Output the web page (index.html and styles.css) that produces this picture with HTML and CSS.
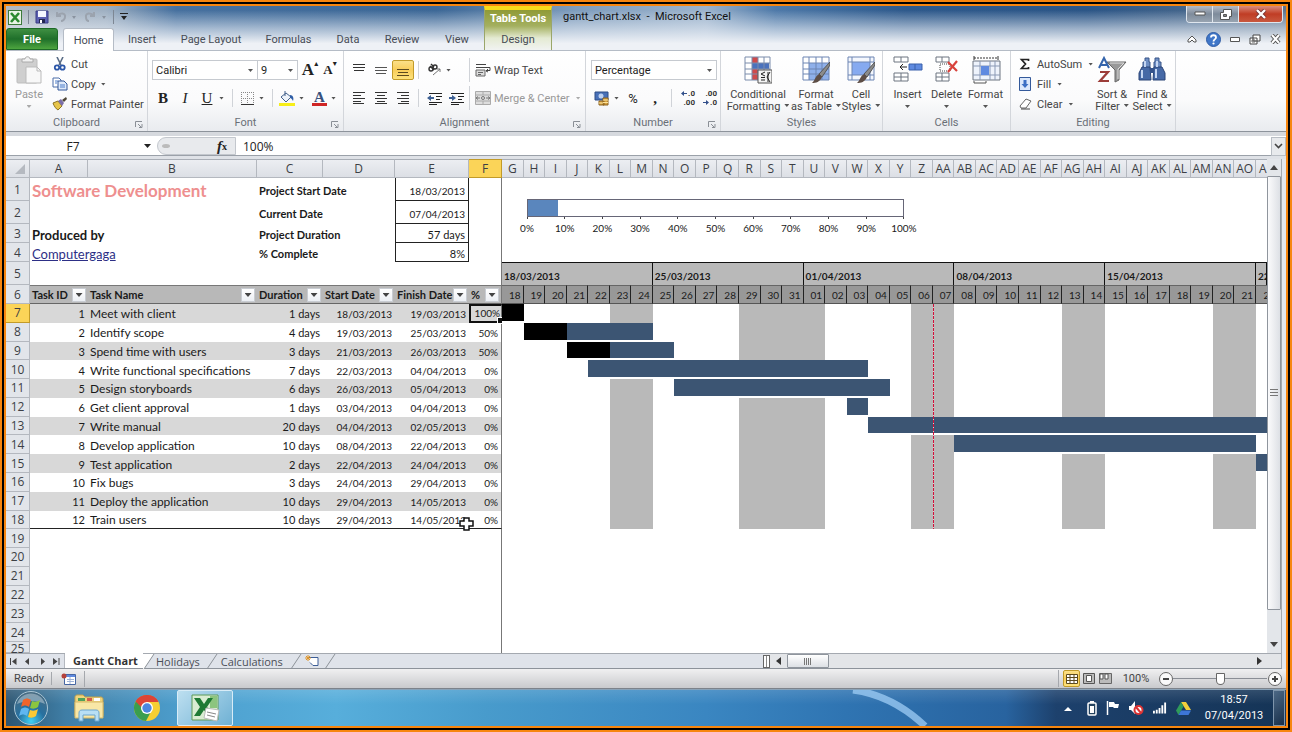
FILE: index.html
```html
<!DOCTYPE html>
<html lang="en">
<head>
<meta charset="UTF-8">
<meta name="viewport" content="width=device-width, initial-scale=1.0">
<title>gantt_chart.xlsx - Microsoft Excel</title>
<link rel="stylesheet" href="styles.css">
</head>
<body>
<div class="frame">
<div class="window">

    <header class="titlebar">
        <div class="quick">
            <svg width="14" height="15" viewBox="0 0 14 15"><rect x=".5" y=".5" width="13" height="14" fill="#e9f5e6" stroke="#3c7a3a"/><path d="M3 3l8 9M11 3l-8 9" stroke="#2b8a2f" stroke-width="2.6"/></svg>
            <i class="bar"></i>
            <button aria-label="Save"><svg width="14" height="14" viewBox="0 0 14 14"><path d="M1 1h12v12H1z" fill="#5b5fb0" stroke="#3a3d86"/><path d="M3 1h8v6H3z" fill="#f4f6ff"/><path d="M4 9h6v4H4z" fill="#23264f"/><path d="M5 10h2v3H5z" fill="#fff"/></svg></button>
            <button aria-label="Undo"><svg width="22" height="12" viewBox="0 0 22 12"><path d="M2 1v4h4M2 5c3-4 9-3 8 1 0 2-2 4-4 4" fill="none" stroke="#9ba3ae" stroke-width="2"/><path d="M17 5h4l-2 3z" fill="#8a93a0"/></svg></button>
            <button aria-label="Redo"><svg width="24" height="12" viewBox="0 0 24 12"><path d="M11 1v4H7M11 5c-3-4-9-3-8 1 0 2 1 4 3 4" fill="none" stroke="#9ba3ae" stroke-width="2"/><path d="M19 5h4l-2 3z" fill="#8a93a0"/></svg></button>
            <i class="bar"></i>
            <button aria-label="Customise"><svg width="8" height="8" viewBox="0 0 8 8"><path d="M0 0h8v1H0zM1 3h6L4 7z" fill="#222"/></svg></button>
        </div>
        <nav class="tabs">
            <button class="tab file">File</button>
            <button class="tab home">Home</button>
            <button class="tab insert">Insert</button>
            <button class="tab page">Page Layout</button>
            <button class="tab formulas">Formulas</button>
            <button class="tab data">Data</button>
            <button class="tab review">Review</button>
            <button class="tab view">View</button>
        </nav>
        <div class="tools-tab">
            <span class="tools-name">Table Tools</span>
            <button class="tab">Design</button>
        </div>
        <div class="doc-title">gantt_chart.xlsx&nbsp; - &nbsp;Microsoft Excel</div>
        <div class="window-side">
            <div class="window-buttons">
                <button class="min" aria-label="Minimise"><svg width="12" height="6" viewBox="0 0 12 6"><path d="M1 1h10v3H1z" fill="#fff" stroke="#555"/></svg></button>
                <button class="max" aria-label="Restore"><svg width="12" height="11" viewBox="0 0 12 11"><path d="M3.500.5h8v7h-2v3h-9v-7h3z" fill="#fff" stroke="#555"/><path d="M3.500 5.500h3v2h-3z" fill="#888" stroke="#555"/></svg></button>
                <button class="close" aria-label="Close"><svg width="12" height="10" viewBox="0 0 12 10"><path d="M2 1l8 8M10 1L2 9" stroke="#733" stroke-width="4"/><path d="M2 1l8 8M10 1L2 9" stroke="#fff" stroke-width="2.400"/></svg></button>
            </div>
            <div class="book-buttons">
                <button aria-label="Hide ribbon"><svg width="10" height="8" viewBox="0 0 10 8"><path d="M1 5l4-4 4 4v2H7L5 5 3 7H1z" fill="#fff" stroke="#555"/></svg></button>
                <button aria-label="Help"><svg width="15" height="15" viewBox="0 0 15 15"><circle cx="7.500" cy="7.500" r="7" fill="#3f76c8" stroke="#2f5ca5"/><path d="M5 5.500c0-3 5-3 5 0 0 2-2.500 1.800-2.500 4" fill="none" stroke="#fff" stroke-width="1.800"/><circle cx="7.500" cy="11.500" r="1.100" fill="#fff"/></svg></button>
                <button aria-label="Minimise workbook"><svg width="10" height="5" viewBox="0 0 10 5"><path d="M.5.5h9v4h-9z" fill="#fff" stroke="#555"/></svg></button>
                <button aria-label="Restore workbook"><svg width="12" height="11" viewBox="0 0 12 11"><path d="M4 1h7v6H4zM1 4h7v6H1z" fill="#fff" stroke="#444"/><path d="M3 6h3v2H3z" fill="none" stroke="#666"/></svg></button>
                <button aria-label="Close workbook"><svg width="11" height="10" viewBox="0 0 11 10"><path d="M2 1l7 8M9 1L2 9" stroke="#555" stroke-width="4"/><path d="M2 1l7 8M9 1L2 9" stroke="#fff" stroke-width="2"/></svg></button>
            </div>
        </div>
    </header>

    <div class="ribbon">
        <section class="group clipboard">
            <div class="group-body">
                <button class="big off">
                    <svg width="28" height="28" viewBox="0 0 28 28"><rect x="2" y="3" width="20" height="24" rx="1" fill="#cfcfcf" stroke="#bdbdbd"/><path d="M7 6V3h3c0-3 5-3 5 0h3v3z" fill="#f1f1f1" stroke="#aaa"/><path d="M11 11h11l4 4v12H11z" fill="#f8f8f8" stroke="#bbb"/><path d="M22 11v4h4" fill="none" stroke="#bbb"/></svg>
                    <span>Paste</span><i class="caret"></i>
                </button>
                <div class="stack">
                    <button><svg width="16" height="14" viewBox="0 0 16 14"><path d="M5 0l4 8M11 0L7 8" stroke="#5b6d86" stroke-width="1.600"/><circle cx="5" cy="10.500" r="2.200" fill="none" stroke="#2b56a8" stroke-width="1.800"/><circle cx="10.500" cy="10.500" r="2.200" fill="none" stroke="#2b56a8" stroke-width="1.800"/></svg>Cut</button>
                    <button><svg width="16" height="14" viewBox="0 0 16 14"><path d="M1 1h6l2 2v7H1z" fill="#fff" stroke="#4a6da8"/><path d="M6 4h6l3 3v6H6z" fill="#dfeafa" stroke="#34599a"/><path d="M3 4h3M3 6h2M8 8h5M8 10h5" stroke="#4f7fca"/></svg>Copy<i class="caret"></i></button>
                    <button><svg width="16" height="14" viewBox="0 0 16 14"><path d="M1 6l5-2 4 5-4 4c-2-1-4-4-5-7z" fill="#e7c54a" stroke="#8c7322"/><path d="M6 4l3-2 3 4-2 3z" fill="#7a6ea8"/><path d="M10 3l4-3 1 2-3 3z" fill="#4d4536"/></svg>Format Painter</button>
                </div>
            </div>
            <footer>Clipboard</footer>
            <button class="launch" aria-label="Clipboard options"><svg width="8" height="7" viewBox="0 0 8 7"><path d="M.5 6V.5H7M3 3l3 3M7 3v3.500H4" fill="none" stroke="#8a8f96"/></svg></button>
        </section>

        <section class="group font">
            <div class="group-body rows">
                <div class="row">
                    <label class="pick font-name"><select aria-label="Font"><option>Calibri</option></select></label>
                    <label class="pick font-size"><select aria-label="Font size"><option>9</option></select></label>
                    <button class="icon serif grow">A<sup>▴</sup></button>
                    <button class="icon serif shrink">A<sup>▾</sup></button>
                </div>
                <div class="row">
                    <button class="icon serif"><b>B</b></button>
                    <button class="icon serif"><em>I</em></button>
                    <button class="icon serif"><u>U</u></button>
                    <i class="caret"></i>
                    <i class="sep"></i>
                    <button class="icon" aria-label="Borders"><svg width="13" height="13" viewBox="0 0 13 13"><path d="M.5 0v12M6.500 0v12M12.500 0v12M0 .5h13M0 6.500h13" stroke="#888" stroke-dasharray="1 1"/><path d="M0 12.500h13" stroke="#333"/></svg></button>
                    <i class="caret"></i>
                    <i class="sep"></i>
                    <button class="icon" aria-label="Fill colour"><svg width="16" height="15" viewBox="0 0 16 15"><path d="M2 6l5-4 5 4-5 5z" fill="#eef3fa" stroke="#43618c"/><path d="M6 0v5" stroke="#43618c"/><path d="M11 4c3 0 4 3 3 6-1-2-2-3-3-3z" fill="#2f5da6"/><path d="M0 12h16v3H0z" fill="#f7ee19"/></svg></button>
                    <i class="caret"></i>
                    <button class="icon font-color serif">A</button>
                    <i class="caret"></i>
                </div>
            </div>
            <footer>Font</footer>
            <button class="launch" aria-label="Font options"><svg width="8" height="7" viewBox="0 0 8 7"><path d="M.5 6V.5H7M3 3l3 3M7 3v3.500H4" fill="none" stroke="#8a8f96"/></svg></button>
        </section>

        <section class="group alignment">
            <div class="group-body rows">
                <div class="row">
                    <button class="icon" aria-label="Top align"><svg width="14" height="14" viewBox="0 0 14 14"><path d="M1 1.500h12M1 4.500h12M2 7.500h10" stroke="#333"/></svg></button>
                    <button class="icon" aria-label="Middle align"><svg width="14" height="14" viewBox="0 0 14 14"><path d="M1 4.500h12M1 7.500h12M2 10.500h10" stroke="#555"/></svg></button>
                    <button class="icon picked" aria-label="Bottom align"><svg width="14" height="14" viewBox="0 0 14 14"><path d="M1 6.500h12M2 9.500h10M1 12.500h12" stroke="#5c4a1e"/></svg></button>
                    <i class="sep"></i>
                    <button class="icon" aria-label="Orientation"><svg width="16" height="14" viewBox="0 0 16 14"><g fill="none" stroke="#333"><circle cx="4" cy="6" r="2" stroke-width="1.400"/><path d="M3 3l4 4" stroke-width="1.400"/><circle cx="8" cy="4" r="2" stroke-width="1.400"/><path d="M4 1l3 3" stroke-width="1.400"/><path d="M6 12l7-6M10 6h3v3" stroke="#777"/></g></svg></button>
                    <i class="caret"></i>
                    <i class="sep tall"></i>
                    <button class="wide"><svg width="16" height="14" viewBox="0 0 16 14"><path d="M1 1.500h10M1 4.500h14v3h-3M13 6l-2 2 2 1" fill="none" stroke="#444"/><path d="M1 7h9v6H1z" fill="#ddd" stroke="#666"/><path d="M3 9.500h5M3 11.500h3" stroke="#666"/></svg>Wrap Text</button>
                </div>
                <div class="row">
                    <button class="icon" aria-label="Align left"><svg width="14" height="12" viewBox="0 0 14 12"><path d="M1 .5h12M1 3.500h8M1 6.500h12M1 9.500h8M1 11.500h11" stroke="#333"/></svg></button>
                    <button class="icon" aria-label="Centre"><svg width="14" height="12" viewBox="0 0 14 12"><path d="M1 .5h12M3 3.500h8M1 6.500h12M3 9.500h8M1 11.500h12" stroke="#333"/></svg></button>
                    <button class="icon" aria-label="Align right"><svg width="14" height="12" viewBox="0 0 14 12"><path d="M1 .5h12M5 3.500h8M1 6.500h12M5 9.500h8M2 11.500h11" stroke="#333"/></svg></button>
                    <i class="sep"></i>
                    <button class="icon" aria-label="Decrease indent"><svg width="16" height="13" viewBox="0 0 16 13"><path d="M2 1.500h13M9 4.500h6M9 7.500h4M2 10.500h13M2 12.500h8" stroke="#222"/><path d="M0 6l4-3v2h3v2H4v2z" fill="#3d6094"/></svg></button>
                    <button class="icon" aria-label="Increase indent"><svg width="16" height="13" viewBox="0 0 16 13"><path d="M2 1.500h13M9 4.500h6M9 7.500h4M2 10.500h13M2 12.500h8" stroke="#222"/><path d="M7 6L3 3v2H0v2h3v2z" fill="#3d6094"/></svg></button>
                    <i class="sep tall merge-sep"></i>
                    <button class="wide off"><svg width="16" height="14" viewBox="0 0 16 14"><path d="M.5.5h15v13H.5zM.5 4h15M.5 10h15M8 0v4M8 10v4" fill="#ddd" stroke="#aaa"/><path d="M1 7h4M11 7h4M3 5.500L1 7l2 1.500M13 5.500L15 7l-2 1.500" stroke="#777" fill="none"/><circle cx="8" cy="7" r="1.500" fill="none" stroke="#777"/></svg>Merge &amp; Center<i class="caret"></i></button>
                </div>
            </div>
            <footer>Alignment</footer>
            <button class="launch" aria-label="Alignment options"><svg width="8" height="7" viewBox="0 0 8 7"><path d="M.5 6V.5H7M3 3l3 3M7 3v3.500H4" fill="none" stroke="#8a8f96"/></svg></button>
        </section>

        <section class="group number">
            <div class="group-body rows">
                <div class="row">
                    <label class="pick format"><select aria-label="Number format"><option>Percentage</option></select></label>
                </div>
                <div class="row">
                    <button class="icon" aria-label="Accounting format"><svg width="16" height="15" viewBox="0 0 16 15"><path d="M1 1h13v8H1z" fill="#4870b8" stroke="#2d4c86"/><circle cx="7" cy="5" r="2.500" fill="#bcd0f0"/><path d="M9 7h5v7H9zM5 10h5v4H5z" fill="#d9a441" stroke="#8c6422"/><path d="M9 9h5M9 11.500h5M5 12h4" stroke="#fbe29b"/></svg></button>
                    <i class="caret"></i>
                    <button class="icon percent">%</button>
                    <button class="icon serif"><b>,</b></button>
                    <i class="sep"></i>
                    <button class="icon dec"><span><svg width="6" height="5" viewBox="0 0 6 5"><path d="M0 2.500L3 0v2h3v1H3v2z" fill="#33508a"/></svg>.0</span><span>.00</span></button>
                    <button class="icon dec"><span>.00</span><span><svg width="6" height="5" viewBox="0 0 6 5"><path d="M6 2.500L3 0v2H0v1h3v2z" fill="#33508a"/></svg>.0</span></button>
                </div>
            </div>
            <footer>Number</footer>
            <button class="launch" aria-label="Number options"><svg width="8" height="7" viewBox="0 0 8 7"><path d="M.5 6V.5H7M3 3l3 3M7 3v3.500H4" fill="none" stroke="#8a8f96"/></svg></button>
        </section>

        <section class="group styles">
            <div class="group-body">
                <button class="big cond">
                    <svg width="28" height="28" viewBox="0 0 28 28"><path d="M1 1h25v23H1z" fill="#fff"/><path d="M8 1h6v23H8z" fill="#cf4a4a"/><path d="M8 7h17v6H8z" fill="#4a72bd"/><path d="M1 1h25v23H1zM8 1v23M14 1v23M20 1v23M1 7h25M1 13h25M1 18h25" fill="none" stroke="#7b8cab"/><path d="M14 14h14v13H14z" fill="#f4f4f4" stroke="#555"/><path d="M17 24h4M17 21.500h4M21 16l-4 2 4 2M24 16v10M26 16l-3 5 3 5" fill="none" stroke="#222"/></svg>
                    <span>Conditional</span><span>Formatting<i class="caret"></i></span>
                </button>
                <button class="big astable">
                    <svg width="28" height="28" viewBox="0 0 28 28"><path d="M1 1h26v23H1z" fill="#fff"/><path d="M7 7h20v17H7z" fill="#8fb0ea"/><path d="M1 1h26v23H1zM7 1v23M14 1v23M20 1v23M1 7h26M1 13h26M1 18h26" fill="none" stroke="#6d85b3"/><path d="M28 6L17 18l3 3 8-12z" fill="#8b8b8b" stroke="#555"/><path d="M17 18l3 3c-2 5-6 6-10 6 3-2 3-7 7-9z" fill="#5d4d45"/></svg>
                    <span>Format</span><span>as Table<i class="caret"></i></span>
                </button>
                <button class="big cellst">
                    <svg width="28" height="28" viewBox="0 0 28 28"><path d="M1 1h26v23H1z" fill="#f4f7fd" stroke="#6d85b3"/><path d="M5 6h18v13H5z" fill="#86aaf0"/><path d="M5 1v23M23 1v23M1 6h26M1 19h26" stroke="#6d85b3"/><path d="M28 6L17 18l3 3 8-12z" fill="#8b8b8b" stroke="#555"/><path d="M17 18l3 3c-2 5-6 6-10 6 3-2 3-7 7-9z" fill="#5d4d45"/></svg>
                    <span>Cell</span><span>Styles<i class="caret"></i></span>
                </button>
            </div>
            <footer>Styles</footer>
        </section>

        <section class="group cells">
            <div class="group-body">
                <button class="big">
                    <svg width="30" height="28" viewBox="0 0 30 28"><path d="M1 1h14v5H1zM8 1v5M1 17h14v8H1zM8 17v8M1 21h14" fill="#fff" stroke="#6c7480"/><path d="M16 8h13v6H16z" fill="#5f8ae0" stroke="#3a60ab"/><path d="M22 8v6" stroke="#3a60ab"/><path d="M7 11h7M10 8l-3 3 3 3" fill="none" stroke="#222"/></svg>
                    <span>Insert</span><i class="caret"></i>
                </button>
                <button class="big">
                    <svg width="26" height="28" viewBox="0 0 26 28"><path d="M2 1h13v5H2zM8 1v5M2 17h13v8H2zM8 17v8M2 21h13" fill="#fff" stroke="#6c7480"/><path d="M6 8h10v7H6z" fill="none" stroke="#444" stroke-dasharray="1 1"/><path d="M14 6l9 9M23 5l-9 11" stroke="#d9423c" stroke-width="2.200"/></svg>
                    <span>Delete</span><i class="caret"></i>
                </button>
                <button class="big">
                    <svg width="30" height="28" viewBox="0 0 30 28"><path d="M3 2h24" stroke="#333" stroke-dasharray="2 1"/><path d="M3 0v4M27 0v4" stroke="#333"/><path d="M2 5h27v19H2z" fill="#eef3fc" stroke="#6c7480"/><path d="M9 5v19M19 5v19M24 5v19M2 10h27M2 19h27" stroke="#8a99b5"/><path d="M10 10h8v9h-8z" fill="#5f8ae0"/><path d="M3 25v2h12v-2" fill="#fff" stroke="#555"/></svg>
                    <span>Format</span><i class="caret"></i>
                </button>
            </div>
            <footer>Cells</footer>
        </section>

        <section class="group editing">
            <div class="group-body">
                <div class="stack">
                    <button><svg width="16" height="14" viewBox="0 0 16 14"><path d="M11.500 4V2.500H4.500L8.500 7l-4 4.500h7V10" fill="none" stroke="#222" stroke-width="1.700"/></svg>AutoSum<i class="caret"></i></button>
                    <button><svg width="16" height="14" viewBox="0 0 16 14"><path d="M2.500.5h11v13h-11z" fill="#dbe8fb" stroke="#34599a"/><path d="M6.500 3h3v4h2L8 11 4.500 7h2z" fill="#3c6fc4"/></svg>Fill<i class="caret"></i></button>
                    <button><svg width="16" height="14" viewBox="0 0 16 14"><path d="M3 9l6-7 5 2-5 7H4z" fill="#fff" stroke="#666"/><path d="M4 12h9" stroke="#444"/></svg>Clear<i class="caret"></i></button>
                </div>
                <button class="big sort">
                    <svg width="30" height="28" viewBox="0 0 30 28"><path d="M10 6h19l-7 8v10l-4 2V14z" fill="#999" stroke="#666"/><path d="M13 7h14l-6 6v10" fill="none" stroke="#ddd"/><path d="M2 12L7 2l5 10M4 9h6" fill="none" stroke="#3464ab" stroke-width="2"/><path d="M3 16h8L3 25h9" fill="none" stroke="#9c3d39" stroke-width="2.200"/></svg>
                    <span>Sort &amp;</span><span>Filter<i class="caret"></i></span>
                </button>
                <button class="big find">
                    <svg width="28" height="28" viewBox="0 0 28 28"><path d="M7 2h4v4h1v6H5V6h2zM17 2h4v4h2v6h-7V6h1z" fill="#6f8fc4" stroke="#3a5689"/><path d="M4 11h8l1 13H1V17zM16 11h8l3 6v7H15z" fill="#4669a6" stroke="#2b4577"/><path d="M12 12h4v5h-4z" fill="#34528a"/><path d="M4 14v8M18 13v9M7 5v6M19 5v6" stroke="#c4d5f1" stroke-width="2"/></svg>
                    <span>Find &amp;</span><span>Select<i class="caret"></i></span>
                </button>
            </div>
            <footer>Editing</footer>
        </section>
    </div>

    <div class="formula">
        <input class="name-box" type="text" value="F7" aria-label="Name box">
        <i class="caret dark"></i>
        <div class="fx-area">
            <svg width="16" height="8" viewBox="0 0 16 8"><ellipse cx="8" cy="4" rx="4" ry="2" fill="#bbb"/></svg>
            <button class="fx" aria-label="Insert function"><i>f</i><small>x</small></button>
        </div>
        <input class="formula-box" type="text" value="100%" aria-label="Formula bar">
        <button class="expand" aria-label="Expand formula bar"><svg width="9" height="6" viewBox="0 0 9 6"><path d="M1 1l3.500 3.500L8 1" fill="none" stroke="#444" stroke-width="1.600"/></svg></button>
    </div>

    <main class="sheet">
        <table class="grid">
            <thead>
                <tr>
                    <th class="corner" aria-label="Select all"></th>
                    <th>A</th><th>B</th><th>C</th><th>D</th><th>E</th><th class="hot">F</th>
                </tr>
            </thead>
            <tbody id="cells">
                <tr><th>1</th><td colspan="2" class="big-title">Software Development</td><td colspan="2" class="strong">Project Start Date</td><td class="boxed date">18/03/2013</td><td></td></tr>
                <tr><th>2</th><td colspan="2"></td><td colspan="2" class="strong">Current Date</td><td class="boxed date">07/04/2013</td><td></td></tr>
                <tr><th>3</th><td colspan="2" class="strong by">Produced by</td><td colspan="2" class="strong">Project Duration</td><td class="boxed">57 days</td><td></td></tr>
                <tr><th>4</th><td colspan="2" class="by"><a href="#">Computergaga</a></td><td colspan="2" class="strong">% Complete</td><td class="boxed">8%</td><td></td></tr>
                <tr><th>5</th><td colspan="6"></td></tr>
                <tr class="heads">
                    <th>6</th>
                    <td>Task ID<button aria-label="Filter Task ID"></button></td>
                    <td>Task Name<button aria-label="Filter Task Name"></button></td>
                    <td>Duration<button aria-label="Filter Duration"></button></td>
                    <td>Start Date<button aria-label="Filter Start Date"></button></td>
                    <td>Finish Date<button aria-label="Filter Finish Date"></button></td>
                    <td>%<button aria-label="Filter %"></button></td>
                </tr>
            </tbody>
        </table>

        <div class="timeline" id="timeline">
            <div class="progress">
                <div class="track"><div class="done" style="width: 8%"></div></div>
                <div class="scale">
                    <span>0%</span><span>10%</span><span>20%</span><span>30%</span><span>40%</span><span>50%</span><span>60%</span><span>70%</span><span>80%</span><span>90%</span><span>100%</span>
                </div>
            </div>
        </div>

        <div class="vscroll">
            <button aria-label="Scroll up"><svg width="8" height="5" viewBox="0 0 8 5"><path d="M0 5l4-5 4 5z" fill="#444"/></svg></button>
            <div class="thumb"><svg width="8" height="8" viewBox="0 0 8 8"><path d="M0 .5h8M0 3.500h8M0 6.500h8" stroke="#777"/></svg></div>
            <button aria-label="Scroll down"><svg width="8" height="5" viewBox="0 0 8 5"><path d="M0 0l4 5 4-5z" fill="#444"/></svg></button>
        </div>
    </main>

    <div class="sheet-bar">
        <div class="sheet-nav">
            <button aria-label="First sheet"><svg width="7" height="7" viewBox="0 0 7 7"><path d="M6.500 0v7L2 3.500z" fill="#444"/><path d="M.5 0v7" stroke="#444"/></svg></button>
            <button aria-label="Previous sheet"><svg width="7" height="7" viewBox="0 0 7 7"><path d="M5 0v7L1 3.500z" fill="#444"/></svg></button>
            <button aria-label="Next sheet"><svg width="7" height="7" viewBox="0 0 7 7"><path d="M2 0v7l4-3.500z" fill="#444"/></svg></button>
            <button aria-label="Last sheet"><svg width="7" height="7" viewBox="0 0 7 7"><path d="M0 0v7l4.500-3.500z" fill="#444"/><path d="M6 0v7" stroke="#444"/></svg></button>
        </div>
        <button class="sheet-tab current">Gantt Chart</button>
        <svg class="slant" width="12" height="16" viewBox="0 0 12 16"><path d="M0 0h11L1 15H0z" fill="#fff"/><path d="M11 0L1 15" stroke="#8d9299"/></svg>
        <button class="sheet-tab holidays">Holidays</button>
        <svg class="slant" width="12" height="16" viewBox="0 0 12 16"><path d="M11 0L1 15" stroke="#8d9299"/></svg>
        <button class="sheet-tab calc">Calculations</button>
        <svg class="slant" width="12" height="16" viewBox="0 0 12 16"><path d="M11 0L1 15" stroke="#8d9299"/></svg>
        <button class="sheet-tab" aria-label="New sheet"><svg width="16" height="12" viewBox="0 0 16 12"><path d="M5 2.500h9v8H9l-3-3" fill="#fff" stroke="#3e5f97"/><path d="M4 0v6M1 3h6M2 1l4 4M6 1L2 5" stroke="#e0962a"/></svg></button>
        <svg class="slant" width="12" height="16" viewBox="0 0 12 16"><path d="M11 0L1 15" stroke="#8d9299"/></svg>
        <div class="hscroll">
            <i class="split"></i>
            <button aria-label="Scroll left"><svg width="5" height="8" viewBox="0 0 5 8"><path d="M5 0v8L0 4z" fill="#333"/></svg></button>
            <div class="thumb"><svg width="8" height="7" viewBox="0 0 8 7"><path d="M.5 0v7M2.500 0v7M4.500 0v7M6.500 0v7" stroke="#777"/></svg></div>
            <i class="room"></i>
            <button aria-label="Scroll right"><svg width="5" height="8" viewBox="0 0 5 8"><path d="M0 0v8l5-4z" fill="#333"/></svg></button>
        </div>
    </div>

    <div class="status">
        <span class="ready">Ready</span>
        <button class="macro" aria-label="Record macro"><svg width="15" height="12" viewBox="0 0 15 12"><path d="M3.500 1.500h11v10h-11z" fill="#fff" stroke="#4666a3"/><path d="M4 2h10v2H4z" fill="#5f8ae0"/><path d="M6 6.500h7M6 8.500h7M9 4v7" stroke="#9fb3d8"/><circle cx="3" cy="3" r="2.500" fill="#b5413b"/></svg></button>
        <div class="views">
            <button class="picked" aria-label="Normal view"><svg width="12" height="10" viewBox="0 0 12 10"><path d="M.5.5h11v9H.5zM4 0v10M8 0v10M0 3.500h12M0 6.500h12" fill="#fff" stroke="#5c4a1e"/></svg></button>
            <button aria-label="Page layout view"><svg width="12" height="11" viewBox="0 0 12 11"><path d="M.5.5h11v10H.5z" fill="#bbb" stroke="#555"/><path d="M3.500 2.500h5v6h-5z" fill="#fff" stroke="#555"/></svg></button>
            <button aria-label="Page break view"><svg width="13" height="11" viewBox="0 0 13 11"><path d="M.5.5h12v10H.5z" fill="#bbb" stroke="#666"/><path d="M1 1h3v5H1zM6 1h3v5H6z" fill="#fff" stroke="#555"/></svg></button>
        </div>
        <span class="zoom-value">100%</span>
        <button class="round" aria-label="Zoom out"><svg width="14" height="14" viewBox="0 0 14 14"><circle cx="7" cy="7" r="6.500" fill="#fafafa" stroke="#666"/><path d="M4 7h6" stroke="#444" stroke-width="2"/></svg></button>
        <input class="zoom" type="range" min="0" max="100" value="50" aria-label="Zoom">
        <button class="round" aria-label="Zoom in"><svg width="14" height="14" viewBox="0 0 14 14"><circle cx="7" cy="7" r="6.500" fill="#fafafa" stroke="#666"/><path d="M4 7h6M7 4v6" stroke="#444" stroke-width="2"/></svg></button>
    </div>

    <footer class="taskbar">
        <svg class="streak" viewBox="0 0 120 36" preserveAspectRatio="none"><path d="M28 0c30 4 55 20 72 36" fill="none" stroke="#9fcdf5" stroke-width="7" opacity=".75"/></svg>
        <button aria-label="Start">
            <svg width="36" height="36" viewBox="0 0 36 36"><defs><radialGradient id="orb" cx=".5" cy=".9" r=".9"><stop offset="0" stop-color="#3fd0f5"/><stop offset=".45" stop-color="#27709f"/><stop offset="1" stop-color="#4a6b80"/></radialGradient></defs><circle cx="18" cy="18" r="16.500" fill="url(#orb)" stroke="#a9c5d5"/><path d="M4 14c4-14 24-14 28 0-8-4-20-4-28 0z" fill="#fff" opacity=".35"/><path d="M10 10c3-2 5-2 8 0l-2 7c-3-2-5-2-8 0z" fill="#f0642b"/><path d="M19 11c3 1 5 1 8-1l-2 7c-3 2-5 2-8 1z" fill="#8cc63f"/><path d="M8 19c3-2 5-2 8 0l-2 7c-3-2-5-2-8 0z" fill="#5fb6f0"/><path d="M17 20c3 1 5 1 8-1l-2 7c-3 2-5 2-8 1z" fill="#fbc934"/></svg>
        </button>
        <button aria-label="Explorer">
            <svg width="32" height="30" viewBox="0 0 32 30"><path d="M2 4c0-1 1-2 2-2h6l2 2h16c1 0 2 1 2 2v17H2z" fill="#eed47c" stroke="#c1a04d"/><path d="M5 5h7v3H5z" fill="#4fa25b"/><path d="M14 5h5v3h-5z" fill="#d45c4c"/><path d="M21 5h6v3h-6z" fill="#fff"/><path d="M2 9h28v16H2z" fill="#f8e7a6" stroke="#d6b968"/><path d="M6 28v-8c0-2 1-3 3-3h14c2 0 3 1 3 3v8h-4v-6H10v6z" fill="#b8dff5" stroke="#6aa5cf"/></svg>
        </button>
        <button aria-label="Chrome">
            <svg width="28" height="28" viewBox="0 0 28 28"><circle cx="14" cy="14" r="13" fill="#f6cf33"/><path d="M14 14L2.700 7.500A13 13 0 0 1 25.300 7.500H14z" fill="#dc4437"/><path d="M2.700 7.500A13 13 0 0 0 13 27l5-9.500-4-3.500z" fill="#3a9e4f"/><path d="M2.700 7.500L9 18l5-10z" fill="#3a9e4f"/><path d="M14 8h11.500a13 13 0 0 0-22.800-.5L8 13z" fill="#dc4437"/><circle cx="14" cy="14" r="6" fill="#fff"/><circle cx="14" cy="14" r="4.700" fill="#4a87e0"/></svg>
        </button>
        <button class="open" aria-label="Excel">
            <svg width="30" height="28" viewBox="0 0 30 28"><path d="M2 1h26v25H2z" fill="#d9edd2" stroke="#5c9a58"/><path d="M20 2h7v12h-7z" fill="#8cc57e"/><path d="M4 4h6l4 6 4-6h5l-6 9 7 9h-6l-4-6-4 6H4l6-9z" fill="#1f7a35"/><path d="M16 14l13 2-2 11-13-3z" fill="#fff" stroke="#bbb"/><path d="M17 18l9 2M17 21l8 2" stroke="#888"/></svg>
        </button>
        <div class="tray">
            <svg class="more" width="8" height="5" viewBox="0 0 8 5"><path d="M0 5l4-4 4 4z" fill="#fff"/></svg>
            <svg width="10" height="15" viewBox="0 0 10 15"><path d="M3 0h4v2H3z" fill="#fff"/><rect x="1" y="2" width="8" height="12" rx="1" fill="#23425f" stroke="#fff" stroke-width="1.500"/><path d="M3 5h4v7H3z" fill="#fff"/></svg>
            <svg width="14" height="14" viewBox="0 0 14 14"><path d="M1.500 0v14" stroke="#fff" stroke-width="1.500"/><path d="M3 1h5l1 2h4l-1 4H8L7 6H3z" fill="#fff"/></svg>
            <svg width="15" height="14" viewBox="0 0 15 14"><path d="M0 5h2l4-5v13L2 9H0z" fill="#fff"/><circle cx="9.500" cy="9" r="4" fill="#fff" stroke="#d33" stroke-width="2"/><path d="M7 6l5 6" stroke="#d33" stroke-width="2"/></svg>
            <svg width="14" height="12" viewBox="0 0 15 12"><path d="M1 12V9M4 12V8M7 12V6M10 12V3M13 12V0" stroke="#fff" stroke-width="2"/></svg>
            <svg width="15" height="13" viewBox="0 0 15 13"><path d="M5 0h5l5 8h-5z" fill="#f3cf3c"/><path d="M5 0l2.500 4.500L2.500 13 0 8.500z" fill="#2f9a5a"/><path d="M5 8.500h10L12.500 13h-10z" fill="#3d76d8"/></svg>
        </div>
        <div class="clock"><span>18:57</span><span>07/04/2013</span></div>
        <button class="peek" aria-label="Show desktop"></button>
    </footer>

</div>
</div>
<script src="script.js"></script>
</body>
</html>
```

FILE: styles.css
```css
* {
    box-sizing: border-box;
}
html, body {
    height: 100%;
}
body {
    margin: 0;
    padding: 2px;
    background: #f7860f;
    font-family: Roboto, "Open Sans", sans-serif;
    font-size: 11px;
    color: #444;
}
.frame {
    height: 100%;
    padding: 2px;
    background: #000;
}
.window {
    height: 100%;
    border: 2px solid #f7860f;
    display: flex;
    flex-direction: column;
    overflow: hidden;
    background: #e4e8ee;
}
button, input, select {
    font: inherit;
    color: inherit;
    margin: 0;
    padding: 0;
    border: 0;
    background: none;
}
button {
    display: flex;
    align-items: center;
    justify-content: center;
    white-space: nowrap;
}
svg {
    display: block;
    flex: none;
}

/* title bar and tabs */
.titlebar {
    position: relative;
    height: 45px;
    flex: none;
    display: flex;
    align-items: flex-end;
    border-bottom: 1px solid #b5bcc6;
    background:
        linear-gradient(to bottom, rgba(238, 242, 247, 0) 10%, rgba(225, 232, 241, .6) 50%, #eef1f6 85%),
        linear-gradient(to right, #b3bac3 0, #9fb0c2 100px, #47719f 170px, #3d6897 430px, #7f9dbd 570px, #9db4cd 700px, #4f7aa9 770px, #2f5a8c 900px, #2c5687 1080px, #5c7590 100%);
}
.quick {
    position: absolute;
    top: 0;
    left: 2px;
    height: 22px;
    display: flex;
    align-items: center;
    gap: 6px;
}
.quick .bar {
    width: 1px;
    height: 14px;
    background: #7d8794;
}
.tabs {
    display: flex;
    height: 22px;
}
.tab {
    height: 22px;
    color: #474c55;
}
.file {
    width: 52px;
    margin-right: 5px;
    color: #fff;
    font-weight: bold;
    border-radius: 3px 3px 0 0;
    border: 1px solid #1d6a26;
    background: linear-gradient(#3f8f42, #1f6f2a 50%, #4da53f);
}
.home {
    width: 51px;
    height: 23px;
    border: 1px solid #b5bcc6;
    border-bottom: 0;
    border-radius: 3px 3px 0 0;
    background: #fff;
}
.insert { width: 56px; }
.page { width: 82px; }
.formulas { width: 73px; }
.data { width: 46px; }
.review { width: 62px; }
.view { width: 48px; }
.tools-tab {
    width: 68px;
    height: 44px;
    margin-left: 3px;
    display: flex;
    flex-direction: column;
    align-items: center;
    border-top: 4px solid #f8dc1a;
    border-left: 1px solid #9aa66a;
    border-right: 1px solid #9aa66a;
    background: linear-gradient(#8f9a36, #a4b060 40%, #e4ead2 70%, #f1f3f2);
}
.tools-name {
    line-height: 18px;
    color: #fff;
    font-weight: bold;
    white-space: nowrap;
}
.doc-title {
    align-self: flex-start;
    padding: 3px 0 0 11px;
    color: #111;
    line-height: 16px;
    white-space: nowrap;
}
.window-side {
    margin-left: auto;
    height: 100%;
    display: flex;
    flex-direction: column;
    align-items: flex-end;
}
.window-buttons {
    display: flex;
    margin-right: 3px;
    border: 1px solid #dfe6ee;
    border-top: 0;
    border-radius: 0 0 4px 4px;
    overflow: hidden;
}
.window-buttons button {
    height: 16px;
    width: 26px;
    border-right: 1px solid #dfe6ee;
    background: linear-gradient(#b4bcc7, #7e8b9b 50%, #98a4b1);
}
.window-buttons .close {
    width: 43px;
    border: 0;
    background: linear-gradient(#dc8d7d, #c03d25 50%, #c8583f);
}
.book-buttons {
    display: flex;
    align-items: center;
    gap: 9px;
    height: 22px;
    margin-top: auto;
    padding-right: 5px;
}

/* ribbon */
.ribbon {
    flex: none;
    height: 81px;
    display: flex;
    background: linear-gradient(#fff, #fbfbfc 60%, #e9ebef);
    border-bottom: 1px solid #8d939b;
}
.group {
    position: relative;
    flex: none;
    display: flex;
    flex-direction: column;
    border-right: 1px solid #d3d6db;
}
.group-body {
    flex: 1;
    min-height: 0;
    display: flex;
}
.group footer {
    flex: none;
    height: 15px;
    line-height: 14px;
    text-align: center;
    color: #6a6f77;
}
.launch {
    position: absolute;
    right: 4px;
    bottom: 3px;
}
.clipboard { width: 142px; }
.font { width: 196px; }
.alignment { width: 242px; }
.number { width: 135px; }
.styles { width: 162px; }
.cells { width: 128px; }
.editing { width: 165px; }

.caret {
    flex: none;
    display: inline-block;
    width: 5px;
    height: 3px;
    background: #555;
    clip-path: polygon(0 0, 100% 0, 50% 100%);
}
.off {
    color: #999;
}
.off .caret {
    background: #aaa;
}
.big {
    flex-direction: column;
    justify-content: flex-start;
    padding-top: 5px;
    line-height: 12px;
}
.big svg {
    margin-bottom: 5px;
}
.big > .caret {
    margin-top: 4px;
}
.big span .caret {
    margin: 0 0 3px 4px;
}
.clipboard .big {
    width: 46px;
}
.stack {
    display: flex;
    flex-direction: column;
    padding-top: 3px;
}
.stack button {
    height: 20px;
    justify-content: flex-start;
    gap: 3px;
}
.clipboard .stack button .caret,
.editing .stack button .caret {
    margin-left: 2px;
}
.editing .stack {
    width: 81px;
    padding-left: 6px;
}
.editing .stack button {
    gap: 4px;
}
.rows {
    flex-direction: column;
    gap: 8px;
    padding: 9px 4px 0;
}
.row {
    height: 20px;
    display: flex;
    align-items: center;
}
.icon {
    flex: none;
    width: 22px;
    height: 20px;
}
.serif {
    font-family: "Liberation Serif", serif;
    font-size: 15px;
    color: #222;
}
.row .grow, .row .shrink {
    width: 20px;
    font-weight: bold;
}
.row .grow {
    font-size: 17px;
    margin-left: 2px;
}
.row .shrink {
    font-size: 13px;
}
.grow sup, .shrink sup {
    font-family: "DejaVu Sans", sans-serif;
    font-size: 8px;
    align-self: flex-start;
    line-height: 8px;
}
.row .font-color {
    font-weight: bold;
    color: #37517d;
    line-height: 12px;
    height: 16px;
    width: 15px;
    border-bottom: 3px solid #cf2626;
}
.sep {
    flex: none;
    width: 1px;
    height: 18px;
    margin: 0 5px;
    background: #d0d3d8;
}
.font .caret { margin-left: 1px; }
.font .sep { margin: 0 3px 0 8px; }
.font .caret + .font-color { margin-left: 8px; }
.font .font-color + .caret { margin-left: 4px; }
.alignment .row .sep { margin: 0 5px 0 4px; }
.alignment .row .tall {
    height: 24px;
    margin: 0 5px 0 18px;
}
.alignment .row .merge-sep { margin-left: 1px; }
.wide {
    gap: 3px;
}
.wide .caret { margin-left: 3px; }
.picked {
    border: 1px solid #c29b29;
    border-radius: 2px;
    background: linear-gradient(#fbe089, #f8cd5a 50%, #fde27b);
}
.pick {
    position: relative;
    flex: none;
    height: 20px;
    border: 1px solid #c6cad0;
    background: #fff;
}
.pick select {
    appearance: none;
    width: 100%;
    height: 18px;
    padding-left: 3px;
    color: #222;
}
.pick::after {
    content: "";
    position: absolute;
    right: 4px;
    top: 8px;
    width: 5px;
    height: 3px;
    background: #555;
    clip-path: polygon(0 0, 100% 0, 50% 100%);
    pointer-events: none;
}
.font-name { width: 106px; }
.font-size {
    width: 40px;
    border-left: 0;
}
.format { width: 126px; }
.number .rows { padding-left: 5px; }
.number .caret { margin: 0 3px 0 1px; }
.number .sep { margin: 0 4px 0 5px; }
.percent {
    font-size: 13px;
    color: #222;
}
.dec {
    flex-direction: column;
    font-size: 8px;
    line-height: 9px;
    font-weight: bold;
    align-items: flex-end;
    color: #333;
    padding-right: 3px;
}
.dec span {
    display: flex;
    align-items: center;
    gap: 1px;
}
.styles .group-body { padding-left: 4px; }
.cond { width: 66px; }
.astable { width: 50px; }
.cellst { width: 40px; }
.cells .group-body { padding-left: 5px; }
.cells .big { width: 39px; }
.sort { width: 40px; }
.find { width: 40px; }

/* formula bar */
.formula {
    flex: none;
    height: 27px;
    display: flex;
    align-items: center;
    border-top: 4px solid #d6d9de;
    border-bottom: 3px solid #dfe2e7;
    background: #fff;
    color: #222;
    box-shadow: inset 0 -1px #9ba1a9;
    font-family: "Open Sans", sans-serif;
}
.name-box {
    width: 134px;
    text-align: center;
    font-size: 12px;
}
.caret.dark {
    width: 7px;
    height: 4px;
    margin: 0 6px 0 4px;
    background: #222;
}
.fx-area {
    width: 79px;
    height: 18px;
    display: flex;
    align-items: center;
    justify-content: space-between;
    padding-right: 8px;
    border: 1px solid #c3c7cd;
    border-radius: 10px 0 0 10px;
    background: #e8eaed;
}
.fx {
    font-family: "Liberation Serif", serif;
    font-size: 15px;
    font-weight: bold;
}
.fx small {
    font-size: 10px;
}
.formula-box {
    flex: 1;
    height: 18px;
    padding-left: 7px;
    font-size: 12px;
}
.expand {
    width: 15px;
    height: 19px;
    border: 1px solid #b9bec5;
    background: #e8eaed;
}

/* worksheet */
.sheet {
    --rows: 19px 23px 23px 19px 19px 23px 19px repeat(18, minmax(0, 1fr)) 11px;
    flex: 1;
    min-height: 0;
    display: flex;
    margin-right: 4px;
    border-right: 1px solid #a4a9b0;
    background: #fff;
    font-family: Lato, "Open Sans", sans-serif;
    font-size: 11px;
    color: #1a1a1a;
}
.grid {
    flex: none;
    display: grid;
    grid-template-columns: 24px 58px 169px 66px 72px 74px 33px;
    grid-template-rows: var(--rows);
    overflow: hidden;
    border-spacing: 0;
}
.grid thead, .grid tbody, .grid tr {
    display: contents;
}
.grid th, .grid td {
    display: flex;
    align-items: center;
    min-width: 0;
    min-height: 0;
    padding: 2px 3px 0 2px;
    white-space: nowrap;
    line-height: 16px;
}
.grid td[colspan="2"] { grid-column: span 2; }
.grid td[colspan="6"] { grid-column: span 6; }
.grid th, .letter {
    justify-content: center;
    padding: 1px 0 0;
    font-family: "Open Sans", "Noto Sans", sans-serif;
    font-size: 12px;
    font-weight: normal;
    color: #3c3f45;
    background: #e2e5ea;
    border-right: 1px solid #b4b8bf;
    border-bottom: 1px solid #b4b8bf;
}
.grid thead th, .letter {
    padding: 0;
    background: linear-gradient(#eceef2, #dcdfe5);
    border-top: 1px solid #a9aeb6;
}
.grid .hot {
    background: #fbd458;
    border-color: #c29b29;
}
.grid thead .corner {
    justify-content: flex-end;
    align-items: flex-end;
}
.corner::after {
    content: "";
    width: 10px;
    height: 10px;
    margin: 0 4px 3px 0;
    background: #b5b9c0;
    clip-path: polygon(100% 0, 100% 100%, 0 100%);
}
.grid tbody tr:last-child th {
    align-items: flex-start;
    line-height: 13px;
    padding: 0;
}
.grid .big-title {
    font-size: 17px;
    font-weight: bold;
    color: #ee8f8f;
}
.strong {
    font-weight: bold;
}
.grid .by {
    font-size: 13px;
}
.by a {
    color: #2d2f86;
}
.grid .boxed {
    justify-content: flex-end;
    padding-top: 3px;
    border: 1px solid #222;
    border-top: 0;
}
.grid .heads td {
    justify-content: space-between;
    padding: 1px 2px 0;
    font-weight: bold;
    background: #b8b8b8;
    border-top: 1px solid #777;
    border-bottom: 1px solid #666;
}
.heads button {
    flex: none;
    width: 14px;
    height: 14px;
    border: 1px solid #c8ccd2;
    background: linear-gradient(#fff, #eceff4);
}
.heads button::after {
    content: "";
    width: 7px;
    height: 4px;
    background: #444;
    clip-path: polygon(0 0, 100% 0, 50% 100%);
}
.grid .task-name {
    font-size: 12px;
}
.grid .num {
    justify-content: flex-end;
}
.grid .date {
    font-size: 10px;
}
.grid tr > td:last-child {
    border-right: 1px solid #777;
}
.grid .odd td {
    background: #d8d8d8;
}
.grid .last td {
    border-bottom: 1px solid #222;
}
.grid td.active {
    position: relative;
    padding: 0 1px;
    border: 2px solid #111;
}
td.active::after {
    content: "";
    position: absolute;
    right: -3px;
    bottom: -3px;
    width: 5px;
    height: 5px;
    border: 1px solid #fff;
    background: #111;
}
.grid .under-mouse {
    position: relative;
}
.mouse {
    position: absolute;
    left: 64px;
    top: 5px;
    z-index: 2;
}

.timeline {
    flex: 1;
    min-width: 0;
    display: grid;
    grid-template-columns: repeat(35, minmax(0, 1fr)) 11px;
    grid-template-rows: var(--rows);
    overflow: hidden;
}
.letter {
    display: flex;
    align-items: center;
    min-width: 0;
}
.week, .day {
    display: flex;
    align-items: center;
    min-width: 0;
    white-space: nowrap;
    font-size: 10px;
}
.week {
    padding: 4px 0 0 2px;
    font-weight: bold;
    background: #b9b9b9;
    border-top: 1px solid #111;
    border-right: 1px solid #111;
    overflow: hidden;
}
.day {
    justify-content: flex-end;
    padding: 1px 2px 0 0;
    background: #989898;
    border-top: 1px solid #666;
    border-right: 1px solid #222;
    border-bottom: 1px solid #555;
}
.letter.cut, .day.cut {
    width: 22px;
}
.weekend {
    background: #b9b9b9;
}
.task {
    background: #3c5573;
    border-bottom: 2px solid #fff;
}
.task.complete {
    background: #000;
}
.today {
    width: 1px;
    background: repeating-linear-gradient(#d0103a 0, #d0103a 3px, #e8c8cc 3px, #e8c8cc 4px);
}
.progress {
    grid-area: 2 / 1 / 6 / -1;
    padding: 21px 0 0 25px;
    min-width: 0;
}
.track {
    width: 377px;
    height: 18px;
    border: 1px solid #667;
}
.done {
    height: 100%;
    background: #5a86bd;
}
.scale {
    display: flex;
    justify-content: space-between;
    width: 407px;
    margin-left: -15px;
    font-size: 10px;
}
.scale span {
    width: 30px;
    display: flex;
    flex-direction: column;
    align-items: center;
    line-height: 12px;
}
.scale span::before {
    content: "";
    width: 1px;
    height: 2px;
    margin-bottom: 3px;
    background: #444;
}

/* scroll bars */
.vscroll {
    width: 14px;
    flex: none;
    display: flex;
    flex-direction: column;
    background: #e3e6ea;
}
.vscroll button {
    height: 17px;
}
.thumb {
    display: flex;
    align-items: center;
    justify-content: center;
    border: 1px solid #8f959d;
    border-radius: 1px;
    background: linear-gradient(to right, #fbfbfc, #dde0e5);
}
.vscroll .thumb {
    flex: 1;
    margin-bottom: 26px;
}
.sheet-bar {
    flex: none;
    height: 16px;
    margin-right: 4px;
    display: flex;
    border-top: 1px solid #a4a9b0;
    border-bottom: 1px solid #8d939b;
    border-right: 1px solid #a4a9b0;
    background: #dfe3ea;
    font-family: "Open Sans", sans-serif;
}
.sheet-nav {
    width: 59px;
    flex: none;
    display: flex;
    justify-content: space-around;
    border-right: 1px solid #b4b8bf;
}
.sheet-tab {
    flex: none;
    font-size: 11px;
    padding: 0 4px 0 2px;
    color: #4b4f57;
}
.current {
    padding: 0 5px 0 8px;
    font-weight: bold;
    background: #fff;
    margin-top: -1px;
    color: #333;
}
.holidays { padding: 0 6px 0 1px; }
.calc { padding: 0 7px 0 3px; }
.hscroll {
    width: 518px;
    flex: none;
    margin-left: auto;
    padding-right: 13px;
    display: flex;
    align-items: center;
    background: #e3e5e8;
}
.hscroll .split {
    width: 7px;
    height: 13px;
    border: 1px solid #666;
    background: linear-gradient(to right, #fff 2px, #888 2px, #888 3px, #fff 3px);
}
.hscroll button {
    width: 17px;
    height: 14px;
}
.hscroll .thumb {
    width: 42px;
    height: 14px;
    background: linear-gradient(#fff, #dde0e5);
}
.hscroll .room {
    flex: 1;
}

/* status bar */
.status {
    flex: none;
    height: 20px;
    display: flex;
    align-items: center;
    padding-right: 4px;
    background: linear-gradient(#f0f0f1, #c9cacd);
    border-bottom: 1px solid #7d838b;
}
.ready {
    width: 46px;
    padding-left: 8px;
    border-right: 1px solid #a5a8ad;
}
.macro {
    width: 33px;
    height: 16px;
    border-right: 1px solid #a5a8ad;
}
.views {
    display: flex;
    margin-left: auto;
    padding-left: 4px;
    border-left: 1px solid #a5a8ad;
}
.views button {
    width: 17px;
    height: 17px;
}
.zoom-value {
    width: 44px;
    text-align: center;
}
.round {
    width: 15px;
}
.zoom {
    appearance: none;
    width: 94px;
    height: 14px;
    background: linear-gradient(#8a8e95, #8a8e95) center / 100% 1px no-repeat;
}
.zoom::-webkit-slider-thumb {
    appearance: none;
    width: 9px;
    height: 12px;
    border: 1px solid #666;
    border-radius: 1px 1px 5px 5px;
    background: #fff;
}

/* taskbar */
.taskbar {
    position: relative;
    flex: none;
    height: 37px;
    display: flex;
    align-items: center;
    border-top: 1px solid #8aa3b8;
    background:
        linear-gradient(rgba(255, 255, 255, .12), rgba(255, 255, 255, 0) 40%),
        linear-gradient(to right, #2c5571 0, #3f7ea6 60px, #4d9fce 180px, #57aedb 330px, #489bcc 480px, #3a86c1 700px, #2f74b2 840px, #28639f 1000px, #1d416d 1050px, #153456 100%);
}
.taskbar > button {
    margin-left: 7px;
}
.taskbar > button + button {
    margin-left: 24px;
}
.taskbar > button + button + button {
    margin-left: 28px;
}
.taskbar > .open {
    width: 56px;
    height: 36px;
    border: 1px solid #d8ecf7;
    border-radius: 2px;
    background: linear-gradient(135deg, #bddff0, #6fb1d4);
}
.taskbar > button.open {
    margin-left: 16px;
}
.streak {
    position: absolute;
    left: 64%;
    top: 0;
    width: 120px;
    height: 36px;
}
.tray {
    display: flex;
    align-items: center;
    gap: 9px;
    margin-left: auto;
}
.tray .more {
    margin-right: 6px;
}
.clock {
    width: 82px;
    padding-left: 4px;
    display: flex;
    flex-direction: column;
    align-items: center;
    line-height: 16px;
    color: #fff;
}
.taskbar > .peek {
    width: 12px;
    height: 36px;
    margin: 0 1px 0 0;
    border: 1px solid #7f95ab;
    background: linear-gradient(135deg, #4c6885, #182f4a);
}
```

FILE: script.js
```js
const tasks = [
    [1, 'Meet with client', '1 days', '18/03/2013', '19/03/2013', '100%'],
    [2, 'Identify scope', '4 days', '19/03/2013', '25/03/2013', '50%'],
    [3, 'Spend time with users', '3 days', '21/03/2013', '26/03/2013', '50%'],
    [4, 'Write functional specifications', '7 days', '22/03/2013', '04/04/2013', '0%'],
    [5, 'Design storyboards', '6 days', '26/03/2013', '05/04/2013', '0%'],
    [6, 'Get client approval', '1 days', '03/04/2013', '04/04/2013', '0%'],
    [7, 'Write manual', '20 days', '04/04/2013', '02/05/2013', '0%'],
    [8, 'Develop application', '10 days', '08/04/2013', '22/04/2013', '0%'],
    [9, 'Test application', '2 days', '22/04/2013', '24/04/2013', '0%'],
    [10, 'Fix bugs', '3 days', '24/04/2013', '29/04/2013', '0%'],
    [11, 'Deploy the application', '10 days', '29/04/2013', '14/05/2013', '0%'],
    [12, 'Train users', '10 days', '29/04/2013', '14/05/2013', '0%']
];

// row, first column, last column + 1, complete
const bars = [
    [7, 1, 2, true],
    [8, 2, 4, true], [8, 4, 8],
    [9, 4, 6, true], [9, 6, 9],
    [10, 5, 18],
    [11, 9, 19],
    [12, 17, 18],
    [13, 18, 37],
    [14, 22, 36],
    [15, 36, 37]
];
const daysOff = [[6, 8], [12, 16], [20, 22], [27, 29], [34, 36]];
const weeks = ['18/03/2013', '25/03/2013', '01/04/2013', '08/04/2013', '15/04/2013', '22/04/2013'];

const cells = document.getElementById('cells');
const timeline = document.getElementById('timeline');

tasks.forEach(function(task, i) {
    const tr = document.createElement('tr');
    if (i % 2 === 0) tr.className = 'odd';
    if (i === tasks.length - 1) tr.className = 'last';
    tr.innerHTML = `
        <th class="${i === 0 ? 'hot' : ''}">${i + 7}</th>
        <td class="num">${task[0]}</td>
        <td class="task-name">${task[1]}</td>
        <td class="num">${task[2]}</td>
        <td class="num date">${task[3]}</td>
        <td class="num date">${task[4]}</td>
        <td class="num date ${i === 0 ? 'active' : ''}">${task[5]}</td>
    `;
    cells.appendChild(tr);
});

// mouse pointer over the last finish date
const finish = cells.lastElementChild.children[5];
finish.classList.add('under-mouse');
finish.insertAdjacentHTML('beforeend', `<svg class="mouse" width="16" height="16" viewBox="0 0 16 16">
    <path d="M5 2h5v3h4v5h-4v4H5v-4H1V5h4z" fill="#fff" stroke="#111" stroke-width="1.500"/></svg>`);

for (let row = 19; row <= 25; row++) {
    cells.insertAdjacentHTML('beforeend', `<tr><th>${row}</th><td colspan="6"></td></tr>`);
}

function put(className, rowFrom, rowTo, colFrom, colTo, text) {
    const div = document.createElement('div');
    div.className = className;
    div.style.gridArea = `${rowFrom} / ${colFrom} / ${rowTo} / ${colTo}`;
    div.textContent = text || '';
    timeline.appendChild(div);
}

function letters(n) {
    return n <= 26 ? String.fromCharCode(64 + n) : 'A' + String.fromCharCode(64 + n - 26);
}

for (let col = 1; col <= 36; col++) {
    const day = new Date(2013, 2, 17 + col).getDate();
    const cut = col === 36 ? ' cut' : '';
    put('letter' + cut, 1, 2, col, col + 1, letters(col + 6));
    put('day' + cut, 7, 8, col, col + 1, String(day).padStart(2, '0'));
}
weeks.forEach((week, i) => put('week', 6, 7, i * 7 + 1, Math.min(i * 7 + 8, 37), week));
daysOff.forEach(off => put('weekend', 8, 20, off[0], off[1]));
bars.forEach(bar => put(bar[3] ? 'task complete' : 'task', bar[0] + 1, bar[0] + 2, bar[1], bar[2]));
put('today', 8, 20, 21, 22);
```
